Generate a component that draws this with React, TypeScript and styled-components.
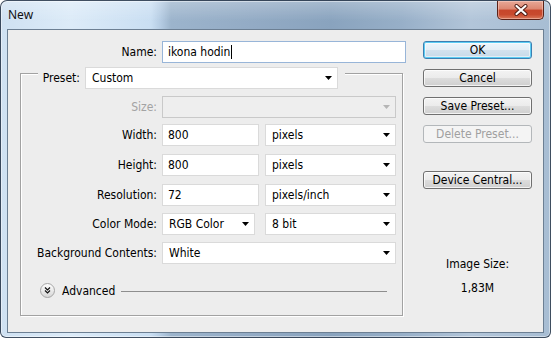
import React from 'react'
import styled, { createGlobalStyle, css } from 'styled-components'

const GlobalStyle = createGlobalStyle`
  html, body {
    margin: 0;
    padding: 0;
    background: #fff;
  }
  body {
    font-family: "DejaVu Sans Condensed", "DejaVu Sans", sans-serif;
    font-size: 12px;
    color: #000;
  }
  * {
    box-sizing: border-box;
  }
`

const Window = styled.div`
  width: 551px;
  height: 338px;
  display: flex;
  flex-direction: column;
  padding: 0 6px 4px 6px;
  border: 1px solid rgba(38, 52, 70, 0.85);
  border-radius: 7px 7px 6px 6px;
  background:
    linear-gradient(180deg, rgba(255, 255, 255, 0.25) 0px, rgba(255, 255, 255, 0) 20px),
    linear-gradient(
      90deg,
      #cfe1f2 0px,
      #dcebf8 70px,
      #c9def2 150px,
      #b4cbe2 160px,
      #9cb4cc 170px,
      #93abc5 250px,
      #89a3be 330px,
      #97afc8 400px,
      #b2c5d9 470px,
      #a7bdd3 551px
    );
  box-shadow: inset 0 0 0 1px rgba(255, 255, 255, 0.45);
`

const TitleBar = styled.div`
  height: 28px;
  display: flex;
  align-items: flex-start;
  justify-content: space-between;
  flex-shrink: 0;
`

const Title = styled.div`
  font-family: "Noto Sans", "Open Sans", sans-serif;
  font-size: 12px;
  line-height: 16px;
  margin: 6px 0 0 1px;
  color: #111;
`

const CloseButton = styled.div`
  width: 47px;
  height: 19px;
  display: flex;
  align-items: center;
  justify-content: center;
  border: 1px solid #5a2218;
  border-top: none;
  border-radius: 0 0 5px 5px;
  background: linear-gradient(
    180deg,
    #e7a897 0%,
    #dc8670 45%,
    #c7462b 50%,
    #c84a2e 75%,
    #d9785a 100%
  );
  box-shadow: inset 0 0 0 1px rgba(255, 220, 210, 0.45);
`

const Client = styled.div`
  flex: 1;
  display: flex;
  padding-top: 11px;
  border: 1px solid #6c7f93;
  background: #ededed;
`

const FormColumn = styled.div`
  width: 400px;
  display: flex;
  flex-direction: column;
  padding-left: 12px;
`

const Row = styled.div<{ $top?: number }>`
  height: 22px;
  display: flex;
  align-items: center;
  margin-top: ${(p) => p.$top ?? 0}px;
`

const Label = styled.div<{ $width: number; $disabled?: boolean }>`
  width: ${(p) => p.$width}px;
  flex-shrink: 0;
  padding-right: 5px;
  text-align: right;
  white-space: nowrap;
  color: ${(p) => (p.$disabled ? '#a3a3a3' : '#000')};
`

const fieldBase = css`
  height: 22px;
  display: flex;
  align-items: center;
  flex-shrink: 0;
  background: #fff;
  border: 1px solid #dadada;
  white-space: nowrap;
`

const TextBox = styled.div<{ $width: number; $focused?: boolean }>`
  ${fieldBase};
  width: ${(p) => p.$width}px;
  padding-left: 5px;
  border-color: ${(p) => (p.$focused ? '#98b5d8' : '#dadada')};
`

const Caret = styled.span`
  display: inline-block;
  width: 1px;
  height: 14px;
  margin-left: 1px;
  background: #000;
`

const SelectBox = styled.div<{ $width: number; $disabled?: boolean; $left?: number }>`
  ${fieldBase};
  width: ${(p) => p.$width}px;
  margin-left: ${(p) => p.$left ?? 0}px;
  padding: 0 5px 0 6px;
  background: ${(p) => (p.$disabled ? '#eeeeee' : '#fff')};
  border-color: ${(p) => (p.$disabled ? '#c9c9c9' : '#dadada')};
`

const SelectValue = styled.span`
  flex: 1;
`

const Group = styled.div`
  margin-top: 10px;
  width: 383px;
  height: 243px;
  display: flex;
  flex-direction: column;
  border: 1px solid #a2a2a2;
  box-shadow: 1px 1px 0 #fff, inset 1px 1px 0 #fff;
`

const PresetRow = styled.div`
  align-self: flex-start;
  height: 21px;
  margin: -7px 0 0 17px;
  padding: 0 7px 0 0;
  display: flex;
  align-items: center;
  background: #ededed;
`

const AdvancedRow = styled.div`
  height: 15px;
  margin: 19px 15px 0 19px;
  display: flex;
  align-items: center;
`

const AdvancedText = styled.span`
  margin: 0 6px 0 7px;
`

const Rule = styled.div`
  flex: 1;
  height: 1px;
  margin-top: 1px;
  background: #8e8e8e;
`

const SideColumn = styled.div`
  width: 109px;
  margin-left: 15px;
  display: flex;
  flex-direction: column;
`

const Button = styled.div<{ $top?: number; $variant?: 'default' | 'disabled' }>`
  height: 18px;
  margin-top: ${(p) => p.$top ?? 0}px;
  display: flex;
  align-items: center;
  justify-content: center;
  line-height: 16px;
  border-radius: 3px;
  border: 1px solid #707070;
  background: linear-gradient(180deg, #f3f3f3 0%, #ebebeb 50%, #dddddd 50%, #cfcfcf 100%);
  box-shadow: inset 0 0 0 1px rgba(255, 255, 255, 0.75);
  ${(p) =>
    p.$variant === 'default' &&
    css`
      border-color: #3c7fb1;
      background: linear-gradient(180deg, #eef6fb 0%, #e3eef6 50%, #d3e2ee 50%, #c6d9e8 100%);
      box-shadow: inset 0 0 0 1px #5ccdf4, inset 0 0 0 2px rgba(255, 255, 255, 0.5);
    `}
  ${(p) =>
    p.$variant === 'disabled' &&
    css`
      border-color: #b3b7ba;
      background: #f4f4f4;
      color: #a0a0a0;
      box-shadow: none;
    `}
`

const InfoText = styled.div<{ $top: number }>`
  margin-top: ${(p) => p.$top}px;
  line-height: 16px;
  text-align: center;
`

const Arrow = ({ disabled }: { disabled?: boolean }) => (
  <svg width="7" height="4" viewBox="0 0 7 4">
    <polygon points="0,0 7,0 3.5,4" fill={disabled ? '#b5b5b5' : '#000'} />
  </svg>
)

const Select = ({
  value,
  width,
  disabled,
  left,
}: {
  value?: string
  width: number
  disabled?: boolean
  left?: number
}) => (
  <SelectBox $width={width} $disabled={disabled} $left={left}>
    <SelectValue>{value}</SelectValue>
    <Arrow disabled={disabled} />
  </SelectBox>
)

const CloseIcon = () => (
  <svg width="14" height="12" viewBox="0 0 14 12">
    <path d="M2.5 2 L11.5 10 M11.5 2 L2.5 10" stroke="#4a1a12" strokeWidth="4" strokeLinecap="round" />
    <path d="M2.5 2 L11.5 10 M11.5 2 L2.5 10" stroke="#fff" strokeWidth="2.2" strokeLinecap="round" />
  </svg>
)

const AdvancedIcon = () => (
  <svg width="15" height="15" viewBox="0 0 15 15">
    <defs>
      <linearGradient id="adv" x1="0" y1="0" x2="0" y2="1">
        <stop offset="0" stopColor="#ffffff" />
        <stop offset="1" stopColor="#d6d6d6" />
      </linearGradient>
    </defs>
    <circle cx="7.5" cy="7.5" r="7" fill="url(#adv)" stroke="#a5a5a5" />
    <path d="M5 4.5 L7.5 7 L10 4.5 M5 7.5 L7.5 10 L10 7.5" stroke="#111" strokeWidth="1.2" fill="none" />
  </svg>
)

const ROW_LABEL = 141

const App = () => (
  <>
    <GlobalStyle />
    <Window>
      <TitleBar>
        <Title>New</Title>
        <CloseButton>
          <CloseIcon />
        </CloseButton>
      </TitleBar>
      <Client>
        <FormColumn>
          <Row>
            <Label $width={142}>Name:</Label>
            <TextBox $width={244} $focused>
              ikona hodin
              <Caret />
            </TextBox>
          </Row>
          <Group>
            <PresetRow>
              <Label $width={47}>Preset:</Label>
              <Select value="Custom" width={253} />
            </PresetRow>
            <Row $top={8}>
              <Label $width={ROW_LABEL} $disabled>
                Size:
              </Label>
              <Select width={234} disabled />
            </Row>
            <Row $top={6}>
              <Label $width={ROW_LABEL}>Width:</Label>
              <TextBox $width={97}>800</TextBox>
              <Select value="pixels" width={131} left={6} />
            </Row>
            <Row $top={8}>
              <Label $width={ROW_LABEL}>Height:</Label>
              <TextBox $width={97}>800</TextBox>
              <Select value="pixels" width={131} left={6} />
            </Row>
            <Row $top={8}>
              <Label $width={ROW_LABEL}>Resolution:</Label>
              <TextBox $width={97}>72</TextBox>
              <Select value="pixels/inch" width={131} left={6} />
            </Row>
            <Row $top={7}>
              <Label $width={ROW_LABEL}>Color Mode:</Label>
              <Select value="RGB Color" width={93} />
              <Select value="8 bit" width={131} left={10} />
            </Row>
            <Row $top={7}>
              <Label $width={ROW_LABEL}>Background Contents:</Label>
              <Select value="White" width={234} />
            </Row>
            <AdvancedRow>
              <AdvancedIcon />
              <AdvancedText>Advanced</AdvancedText>
              <Rule />
            </AdvancedRow>
          </Group>
        </FormColumn>
        <SideColumn>
          <Button $variant="default">OK</Button>
          <Button $top={10}>Cancel</Button>
          <Button $top={10}>Save Preset...</Button>
          <Button $top={10} $variant="disabled">
            Delete Preset...
          </Button>
          <Button $top={28}>Device Central...</Button>
          <InfoText $top={67}>Image Size:</InfoText>
          <InfoText $top={8}>1,83M</InfoText>
        </SideColumn>
      </Client>
    </Window>
  </>
)

export default App
